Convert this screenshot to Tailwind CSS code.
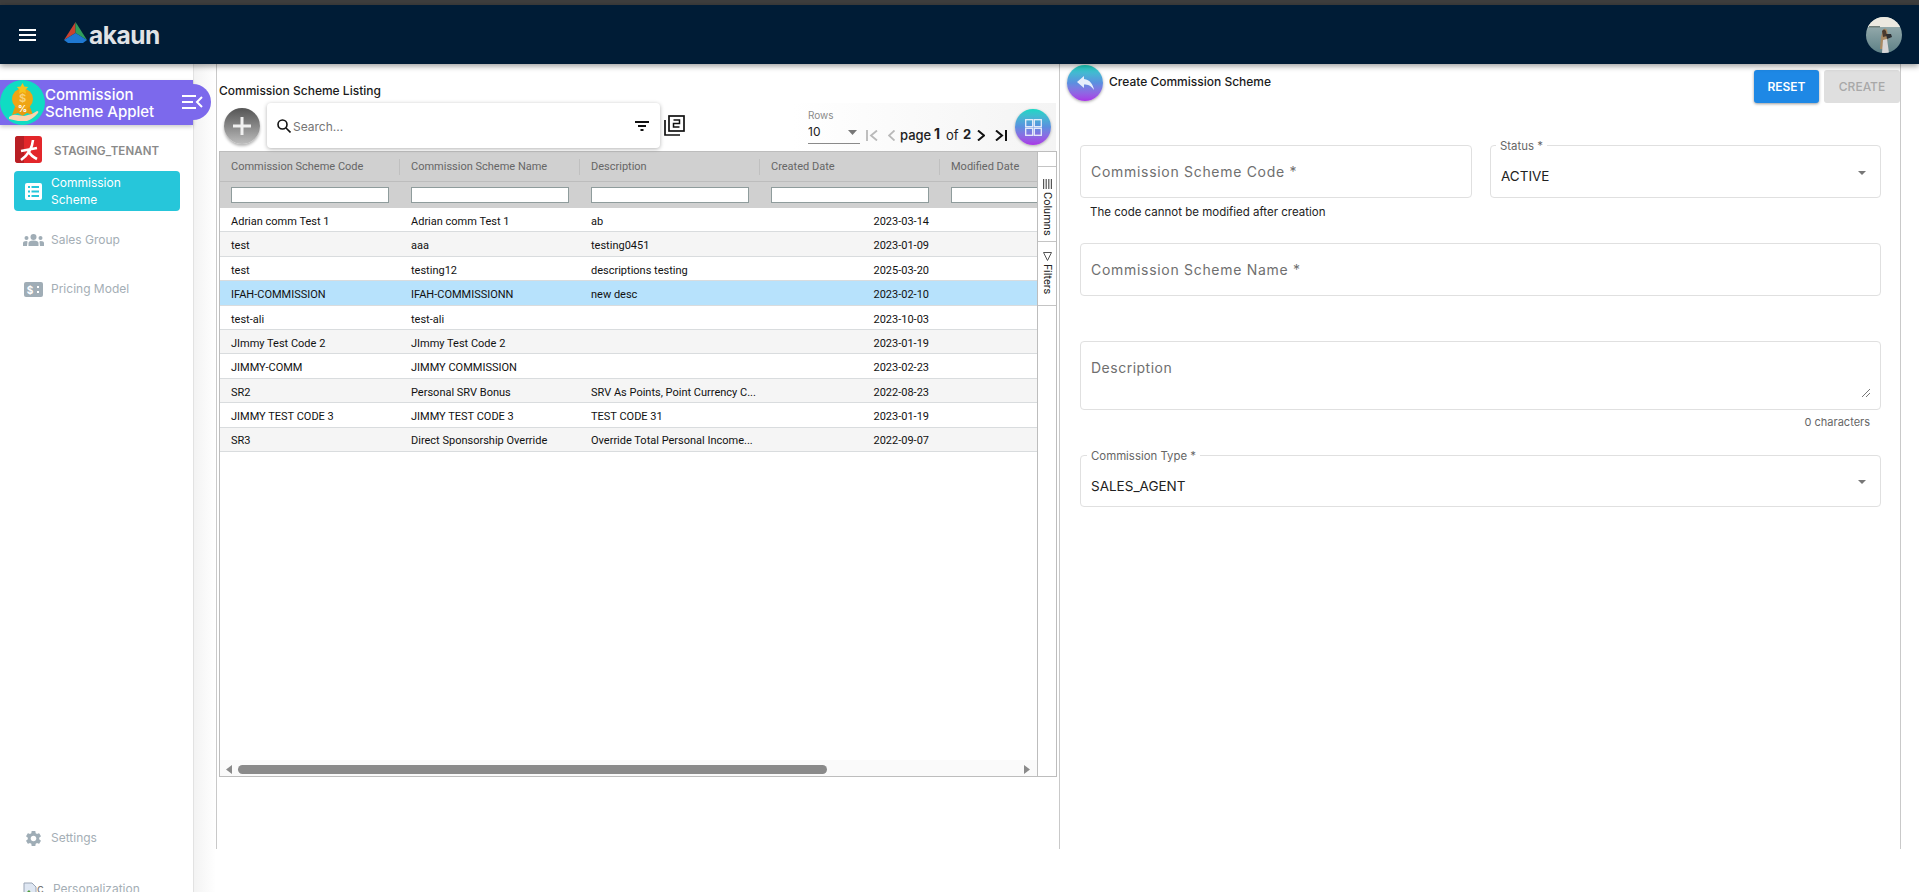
<!DOCTYPE html>
<html lang="en">
<head>
    <meta charset="UTF-8">
    <title>Commission Scheme Applet</title>
    <script src="https://cdn.jsdelivr.net/npm/@tailwindcss/browser@4"></script>
</head>
<body class="h-[892px] overflow-hidden bg-white font-[Inter,sans-serif] text-[#212121]">
    <div class="h-[5px] bg-[#3e3e3e]"></div>

    <!-- top bar -->
    <header class="relative z-20 flex h-[59px] items-center bg-[#001c36] shadow-[0_2px_6px_rgba(0,0,0,0.4)]">
        <svg class="ml-[19px] h-[12px] w-[17px]" viewBox="0 0 17 12" fill="#fff"><rect width="17" height="2"/><rect y="5" width="17" height="2"/><rect y="10" width="17" height="2"/></svg>
        <svg class="mb-[4px] ml-[28px] h-[21px] w-[23px]" viewBox="0 0 23 21">
            <path d="M11.500 0L0 18l11.500-7z" fill="#c9432f"/>
            <path d="M11.500 0L23 18l-11.500-7z" fill="#2f9e5b"/>
            <path d="M0 18l11.500-7L23 18l-4 3H4z" fill="#1f78d1"/>
        </svg>
        <span class="mt-[2px] ml-[2px] text-[24.500px] leading-none font-bold tracking-[-0.5px] text-[#e0e3e6]">akaun</span>
        <svg class="mr-[17px] ml-auto h-[36px] w-[36px] rounded-full" viewBox="0 0 36 36">
            <defs><linearGradient id="sea" x1="0" y1="0" x2="0" y2="1"><stop offset="0" stop-color="#a7b8b8"/><stop offset="1" stop-color="#5d8086"/></linearGradient></defs>
            <rect width="36" height="36" fill="url(#sea)"/>
            <rect width="36" height="10" fill="#ece9e0"/>
            <rect x="3" y="9" width="11" height="1.500" fill="#6f7d78"/>
            <path d="M14 32l1-12 2-7q2-3 4 0l1 6-2 13z" fill="#a98a64"/>
            <path d="M16 14q2-3 4 0l1 5-4 1z" fill="#4a3a2e"/>
            <path d="M20 17l5 0 1 3-5 2z" fill="#2c2f33"/>
            <path d="M16 36l1-13 4-1 2 14z" fill="#d8d6d8"/>
        </svg>
    </header>

    <div class="flex h-[828px]">
        <!-- sidebar -->
        <aside class="relative flex w-[194px] shrink-0 flex-col border-r border-[#e2e2e2] bg-white">
            <div class="mt-[16px] flex h-[45px] items-center bg-[#7c69ec] shadow-[0_2px_4px_rgba(0,0,0,0.2)]">
                <div class="h-[45px] w-[45px] shrink-0 rounded-full bg-[#0fdcc3]">
                    <svg class="h-[45px] w-[45px]" viewBox="0 0 45 45">
                        <path d="M16 24l-4 11 6-2 4.500 3 4.500-3 6 2-4-11z" fill="#e59b12"/>
                        <circle cx="22.500" cy="19" r="10.500" fill="#efa514"/>
                        <path d="M22.500 3l1.800 3.500 3.900.5-2.800 2.800.7 3.900-3.600-1.800-3.600 1.800.7-3.900-2.800-2.800 3.900-.5z" fill="#f7c21c"/>
                        <text x="22.500" y="22" font-size="11" text-anchor="middle" fill="#f8d27a" font-weight="700">$</text>
                        <text x="22.500" y="32" font-size="9" text-anchor="middle" fill="#fff" font-weight="700">%</text>
                        <path d="M9 37q4-3 8-2l7 1 4-1q5-1 9-4 2 0 1 2-5 6-11 8H18q-4-1-9-2z" fill="#fbd3b0"/>
                    </svg>
                </div>
                <p class="text-[15px] leading-[17px] font-medium text-white">Commission<br>Scheme Applet</p>
            </div>
            <div class="absolute top-[20px] left-[180px] z-10 flex h-[36px] w-[31px] items-center rounded-r-full bg-[#7c69ec] pl-[2px]">
                <svg class="h-[14px] w-[21px]" viewBox="0 0 21 14" fill="none" stroke="#fff" stroke-width="2"><path d="M0 1h14M0 7h11M0 13h14M20 2l-5 5 5 5"/></svg>
            </div>

            <div class="mt-[11px] flex items-center pl-[15px]">
                <svg class="h-[27px] w-[27px] rounded-[3px]" viewBox="0 0 27 27">
                    <rect width="27" height="27" fill="#e3262a"/>
                    <rect width="9" height="27" fill="#b81f24"/>
                    <path d="M6 15l16-3M18 4q-1 12-12 20M13 15q3 5 9 8" fill="none" stroke="#fff" stroke-width="2.600"/>
                </svg>
                <span class="ml-[12px] pt-[4px] text-[11.500px] font-semibold tracking-[0.1px] text-[#8a8a8a]">STAGING_TENANT</span>
            </div>

            <div class="mt-[8px] ml-[14px] flex h-[40px] w-[166px] items-center rounded-[4px] bg-[#26c6da] pl-[11px] text-white">
                <svg class="h-[17px] w-[17px]" viewBox="0 0 17 17"><rect width="17" height="17" rx="2" fill="#fff"/><path d="M3 4h2M6.500 4H14M3 8.500h2M6.500 8.500H14M3 13h2M6.500 13H14" stroke="#26c6da" stroke-width="2"/></svg>
                <span class="ml-[9px] text-[12px] leading-[17px]">Commission<br>Scheme</span>
            </div>

            <div class="mt-[19px] flex h-[20px] items-center pl-[23px] text-[12px] text-[#a4aeb5]">
                <svg class="h-[12px] w-[21px]" viewBox="0 0 21 12" fill="#a0adb6"><circle cx="10.500" cy="3" r="3"/><circle cx="3.500" cy="4" r="2"/><circle cx="17.500" cy="4" r="2"/><path d="M5.500 12V9q0-2.500 5-2.500t5 2.500v3zM0 12V9q0-2 3.500-2l1 .5L4 12zM21 12V9q0-2-3.500-2l-1 .5.5 4.500z"/></svg>
                <span class="ml-[7px]">Sales Group</span>
            </div>
            <div class="mt-[29px] flex h-[20px] items-center pl-[24px] text-[12px] text-[#a4aeb5]">
                <svg class="h-[15px] w-[19px]" viewBox="0 0 19 15"><rect width="19" height="15" rx="2" fill="#a0adb6"/><text x="6" y="11.500" font-size="10" font-weight="700" text-anchor="middle" fill="#fff">$</text><path d="M13 5h2M13 10h2" stroke="#fff" stroke-width="2"/></svg>
                <span class="ml-[8px]">Pricing Model</span>
            </div>

            <div class="mt-auto flex h-[20px] items-center pl-[24px] text-[12px] text-[#a4aeb5]">
                <svg class="h-[19px] w-[19px]" viewBox="0 0 24 24" fill="#9fadb6"><path d="M19.140 12.940c.040-.300.060-.610.060-.940 0-.320-.020-.640-.070-.940l2.030-1.580a.49.49 0 0 0 .120-.610l-1.920-3.320a.488.488 0 0 0-.590-.220l-2.390.960c-.500-.380-1.030-.700-1.620-.940l-.360-2.540a.484.484 0 0 0-.480-.410h-3.840c-.240 0-.430.170-.470.410l-.360 2.540c-.590.240-1.130.570-1.620.940l-2.390-.960c-.220-.080-.470 0-.590.220L2.740 8.870c-.120.210-.080.470.120.610l2.030 1.580c-.050.300-.090.630-.090.940s.020.640.070.940l-2.030 1.580a.49.49 0 0 0-.120.610l1.920 3.320c.120.220.370.290.590.220l2.390-.960c.500.380 1.030.700 1.620.940l.360 2.540c.050.240.240.410.480.410h3.840c.240 0 .440-.170.470-.410l.360-2.540c.590-.240 1.130-.560 1.620-.940l2.390.960c.220.080.470 0 .590-.220l1.920-3.320c.120-.220.070-.470-.120-.610l-2.010-1.580zM12 15.600c-1.980 0-3.600-1.620-3.600-3.600s1.620-3.600 3.600-3.600 3.600 1.620 3.600 3.600-1.620 3.600-3.600 3.600z"/></svg>
                <span class="ml-[8px]">Settings</span>
            </div>
            <div class="mt-[31px] -mb-[7px] flex h-[20px] items-center pl-[23px] text-[12px] text-[#a4aeb5]">
                <svg class="h-[14px] w-[14px]" viewBox="0 0 14 14"><path d="M1 1h8l4 4v8H1z" fill="#dfe7f3" stroke="#9aa5b5"/><path d="M1 13l5-5 4 5z" fill="#4f9e3a"/></svg>
                <span class="w-[7px] overflow-hidden text-[#777]">c</span>
                <span class="ml-[9px]">Personalization</span>
            </div>
        </aside>

        <div class="w-[22px] shrink-0 bg-gradient-to-r from-[#f3f3f3] to-white"></div>

        <main class="flex h-[785px] w-[1685px] shrink-0 border-x border-[#c9c9c9]">
            <!-- listing -->
            <section class="w-[843px] shrink-0 border-r border-[#c9c9c9] pl-[2px]">
                <h2 class="pt-[19px] text-[12px] leading-[15px] font-medium text-[#1b1b1b]">Commission Scheme Listing</h2>
                <div class="relative mt-[5px] flex h-[48px] items-start">
                    <div class="mt-[5px] ml-[5px] flex h-[36px] w-[36px] items-center justify-center rounded-full bg-gradient-to-b from-[#555555] to-[#bdbdbd] shadow-[0_2px_3px_rgba(0,0,0,0.3)]">
                        <svg class="h-[18px] w-[18px]" viewBox="0 0 18 18" fill="#f0f0f0"><rect x="7.500" width="3" height="18"/><rect y="7.500" width="18" height="3"/></svg>
                    </div>
                    <div class="ml-[7px] flex h-[45px] w-[393px] items-center rounded-[4px] bg-white pr-[11px] pl-[10px] shadow-[0_1px_4px_rgba(0,0,0,0.3)]">
                        <svg class="h-[14px] w-[14px]" viewBox="0 0 14 14" fill="none" stroke="#111" stroke-width="1.600"><circle cx="5.500" cy="5.500" r="4.500"/><path d="M9 9l4.500 4.500"/></svg>
                        <span class="ml-[2px] pt-[2px] text-[12px] text-[#757575]">Search...</span>
                        <svg class="ml-auto h-[10px] w-[14px]" viewBox="0 0 14 10" fill="#111"><rect width="14" height="2"/><rect x="3" y="4" width="8" height="2"/><rect x="5.500" y="8" width="3" height="2"/></svg>
                    </div>
                    <svg class="mt-[12px] ml-[4px] h-[21px] w-[21px]" viewBox="0 0 21 21" fill="none" stroke="#111" stroke-width="1.700"><path d="M1 5v15h15"/><rect x="5" y="1" width="15" height="15"/><path d="M9.500 5h6v3.500h-6V12h6" stroke-width="1.500"/></svg>
                    <div class="mr-[3px] ml-auto flex h-[48px] w-[264px] bg-gradient-to-r from-white to-[#f4f4f4]">
                        <div class="ml-[16px] h-[41px] w-[52px] shrink-0 border-b border-[#8a8a8a]">
                            <p class="pt-[6px] text-[10px] leading-[12px] text-[#8a8a8a]">Rows</p>
                            <div class="flex items-center justify-between pt-[4px] pr-[3px] text-[12px] leading-[14px]">10
                                <svg class="h-[5px] w-[9px]" viewBox="0 0 9 5" fill="#777"><path d="M0 0h9L4.500 5z"/></svg>
                            </div>
                        </div>
                        <svg class="mt-[27px] ml-[6px] h-[11px] w-[12px] shrink-0" viewBox="0 0 12 11" fill="none" stroke="#b9b9b9" stroke-width="1.800"><path d="M1 0v11M11 .5L5 5.500l6 5"/></svg>
                        <svg class="mt-[27px] ml-[10px] h-[11px] w-[7px] shrink-0" viewBox="0 0 7 11" fill="none" stroke="#b9b9b9" stroke-width="1.800"><path d="M6.500 .5L1 5.500l5.500 5"/></svg>
                        <span class="mt-[24px] ml-[5px] w-[31px] shrink-0 text-[13px] leading-[16px] font-medium">page</span>
                        <b class="mt-[23px] ml-[3px] w-[8px] shrink-0 text-[14px] leading-[16px]">1</b>
                        <span class="mt-[24px] ml-[4px] w-[13px] shrink-0 text-[13px] leading-[16px]">of</span>
                        <b class="mt-[23px] ml-[4px] w-[9px] shrink-0 text-[13px] leading-[16px]">2</b>
                        <svg class="mt-[27px] ml-[5px] h-[11px] w-[8px] shrink-0" viewBox="0 0 8 11" fill="none" stroke="#111" stroke-width="2"><path d="M1 .5L7 5.500l-6 5"/></svg>
                        <svg class="mt-[27px] ml-[10px] h-[11px] w-[12px] shrink-0" viewBox="0 0 12 11" fill="none" stroke="#111" stroke-width="2"><path d="M1 .5L7 5.500l-6 5M11 0v11"/></svg>
                        <div class="mt-[6px] ml-[8px] flex h-[36px] w-[36px] shrink-0 items-center justify-center rounded-full bg-gradient-to-b from-[#13d8c4] via-[#5a8fdf] to-[#a834e6] shadow-[0_1px_3px_rgba(0,0,0,0.3)]">
                            <svg class="h-[17px] w-[17px]" viewBox="0 0 17 17" fill="none" stroke="#e8eefa" stroke-width="1.300"><rect x=".7" y=".7" width="7" height="7"/><rect x="9.300" y=".7" width="7" height="7"/><rect x=".7" y="9.300" width="7" height="7"/><rect x="9.300" y="9.300" width="7" height="7"/></svg>
                        </div>
                    </div>
                </div>

                <!-- grid -->
                <div class="flex h-[626px] w-[838px] border border-[#bdbdbd] font-[Roboto,sans-serif] text-[11px]">
                    <div class="flex w-[817px] shrink-0 flex-col">
                        <div class="flex h-[29px] shrink-0 items-center overflow-hidden bg-[#d0d0d0] pt-[1px] text-[#666]">
                            <div class="w-[179px] shrink-0 pl-[11px]">Commission Scheme Code</div>
                            <div class="w-[180px] shrink-0 border-l border-[#c0c0c0] pl-[11px]">Commission Scheme Name</div>
                            <div class="w-[180px] shrink-0 border-l border-[#c0c0c0] pl-[11px]">Description</div>
                            <div class="w-[180px] shrink-0 border-l border-[#c0c0c0] pl-[11px]">Created Date</div>
                            <div class="w-[180px] shrink-0 border-l border-[#c0c0c0] pl-[11px]">Modified Date</div>
                        </div>
                        <div class="flex h-[27px] shrink-0 items-center overflow-hidden border-t border-[#bdbdbd] bg-[#d0d0d0] pl-[11px]">
                            <div class="mr-[22px] h-[16px] w-[158px] shrink-0 border border-[#8f9c9c] bg-white"></div>
                            <div class="mr-[22px] h-[16px] w-[158px] shrink-0 border border-[#8f9c9c] bg-white"></div>
                            <div class="mr-[22px] h-[16px] w-[158px] shrink-0 border border-[#8f9c9c] bg-white"></div>
                            <div class="mr-[22px] h-[16px] w-[158px] shrink-0 border border-[#8f9c9c] bg-white"></div>
                            <div class="h-[16px] w-[158px] shrink-0 border border-[#8f9c9c] bg-white"></div>
                        </div>
                        <div class="flex-1 text-[#111]">
                            <div class="flex h-[24.400px] items-center border-b border-[#d9dcde] bg-white pt-[5px]"><span class="w-[179px] pl-[11px]">Adrian comm Test 1</span><span class="w-[180px] pl-[12px]">Adrian comm Test 1</span><span class="w-[180px] pl-[12px]">ab</span><span class="w-[170px] text-right">2023-03-14</span></div>
                            <div class="flex h-[24.400px] items-center border-b border-[#d9dcde] bg-[#f5f5f5] pt-[5px]"><span class="w-[179px] pl-[11px]">test</span><span class="w-[180px] pl-[12px]">aaa</span><span class="w-[180px] pl-[12px]">testing0451</span><span class="w-[170px] text-right">2023-01-09</span></div>
                            <div class="flex h-[24.400px] items-center border-b border-[#d9dcde] bg-white pt-[5px]"><span class="w-[179px] pl-[11px]">test</span><span class="w-[180px] pl-[12px]">testing12</span><span class="w-[180px] pl-[12px]">descriptions testing</span><span class="w-[170px] text-right">2025-03-20</span></div>
                            <div class="flex h-[24.400px] items-center border-b border-[#d9dcde] bg-[#b7e2fc] pt-[5px]"><span class="w-[179px] pl-[11px]">IFAH-COMMISSION</span><span class="w-[180px] pl-[12px]">IFAH-COMMISSIONN</span><span class="w-[180px] pl-[12px]">new desc</span><span class="w-[170px] text-right">2023-02-10</span></div>
                            <div class="flex h-[24.400px] items-center border-b border-[#d9dcde] bg-white pt-[5px]"><span class="w-[179px] pl-[11px]">test-ali</span><span class="w-[180px] pl-[12px]">test-ali</span><span class="w-[180px] pl-[12px]"></span><span class="w-[170px] text-right">2023-10-03</span></div>
                            <div class="flex h-[24.400px] items-center border-b border-[#d9dcde] bg-[#f5f5f5] pt-[5px]"><span class="w-[179px] pl-[11px]">JImmy Test Code 2</span><span class="w-[180px] pl-[12px]">JImmy Test Code 2</span><span class="w-[180px] pl-[12px]"></span><span class="w-[170px] text-right">2023-01-19</span></div>
                            <div class="flex h-[24.400px] items-center border-b border-[#d9dcde] bg-white pt-[5px]"><span class="w-[179px] pl-[11px]">JIMMY-COMM</span><span class="w-[180px] pl-[12px]">JIMMY COMMISSION</span><span class="w-[180px] pl-[12px]"></span><span class="w-[170px] text-right">2023-02-23</span></div>
                            <div class="flex h-[24.400px] items-center border-b border-[#d9dcde] bg-[#f5f5f5] pt-[5px]"><span class="w-[179px] pl-[11px]">SR2</span><span class="w-[180px] pl-[12px]">Personal SRV Bonus</span><span class="w-[180px] pl-[12px]">SRV As Points, Point Currency C...</span><span class="w-[170px] text-right">2022-08-23</span></div>
                            <div class="flex h-[24.400px] items-center border-b border-[#d9dcde] bg-white pt-[5px]"><span class="w-[179px] pl-[11px]">JIMMY TEST CODE 3</span><span class="w-[180px] pl-[12px]">JIMMY TEST CODE 3</span><span class="w-[180px] pl-[12px]">TEST CODE 31</span><span class="w-[170px] text-right">2023-01-19</span></div>
                            <div class="flex h-[24.400px] items-center border-b border-[#d9dcde] bg-[#f5f5f5] pt-[5px]"><span class="w-[179px] pl-[11px]">SR3</span><span class="w-[180px] pl-[12px]">Direct Sponsorship Override</span><span class="w-[180px] pl-[12px]">Override Total Personal Income...</span><span class="w-[170px] text-right">2022-09-07</span></div>
                        </div>
                        <div class="flex h-[16px] shrink-0 items-center bg-[#fafafa] pt-[2px]">
                            <svg class="ml-[6px] h-[9px] w-[6px]" viewBox="0 0 6 9" fill="#8a8a8a"><path d="M6 0v9L0 4.500z"/></svg>
                            <div class="ml-[6px] h-[9px] w-[589px] rounded-full bg-[#8a8a8a]"></div>
                            <svg class="mr-[7px] ml-auto h-[9px] w-[6px]" viewBox="0 0 6 9" fill="#8a8a8a"><path d="M0 0v9l6-4.500z"/></svg>
                        </div>
                    </div>
                    <div class="flex-1 border-l border-[#bdbdbd] pt-[14px] text-[#222]">
                        <div class="flex h-[76px] flex-col items-center border-y border-[#c4c4c4] pt-[12px]">
                            <svg class="h-[10px] w-[9px]" viewBox="0 0 9 10" fill="#555"><path d="M0 0h1.200v10H0zM2.600 0h1.200v10H2.600zM5.200 0h1.200v10H5.200zM7.800 0H9v10H7.800z"/></svg>
                            <span class="mt-[3px] [writing-mode:vertical-lr]">Columns</span>
                        </div>
                        <div class="flex h-[64px] flex-col items-center border-b border-[#c4c4c4] pt-[10px]">
                            <svg class="h-[9px] w-[9px]" viewBox="0 0 9 9" fill="none" stroke="#555"><path d="M.5 .5h8L4.500 8.500z"/></svg>
                            <span class="mt-[3px] [writing-mode:vertical-lr]">Filters</span>
                        </div>
                    </div>
                </div>
            </section>

            <!-- create form -->
            <section class="flex-1 pr-[19px] pl-[20px]">
                <div class="relative flex h-[81px] items-start">
                    <div class="mt-[1px] -ml-[13px] flex h-[36px] w-[36px] items-center justify-center rounded-full bg-gradient-to-b from-[#13d8c4] via-[#5a8fdf] to-[#a834e6] shadow-[0_1px_3px_rgba(0,0,0,0.35)]">
                        <svg class="h-[14px] w-[17px]" viewBox="0 0 17 14" fill="#e6eefb"><path d="M7 0L0 6l7 6V8.500c4 0 7 1 10 5.500-1-6-4-10-10-11z"/></svg>
                    </div>
                    <h2 class="mt-[10px] ml-[6px] text-[12px] leading-[15px] font-medium text-[#1b1b1b]">Create Commission Scheme</h2>
                    <button class="mt-[6px] ml-auto flex h-[33px] w-[65px] items-center justify-center rounded-[3px] bg-[#1e88e5] text-[12px] font-semibold text-white shadow-[0_1px_3px_rgba(0,0,0,0.4)]">RESET</button>
                    <button class="mt-[6px] ml-[5px] -mr-[19px] flex h-[33px] w-[76px] items-center justify-center rounded-[3px] bg-[#dfdfdf] text-[12px] font-medium text-[#a8a8a8]">CREATE</button>
                </div>
                <div class="flex gap-[18px]">
                    <div class="w-[392px]">
                        <div class="flex h-[53px] items-center rounded-[4px] border border-[#e0e0e0] pl-[10px] text-[14px] tracking-[0.7px] text-[#6f6f6f]">Commission Scheme Code *</div>
                        <p class="mt-[8px] pl-[10px] text-[11.500px] leading-[13px] text-[#222]">The code cannot be modified after creation</p>
                    </div>
                    <div class="relative flex h-[53px] w-[391px] items-center justify-between rounded-[4px] border border-[#e0e0e0] pt-[10px] pr-[14px] pl-[10px] text-[13.500px]">
                        <span class="absolute -top-[7px] left-[5px] bg-white px-[4px] text-[11.400px] leading-[14px] text-[#666]">Status *</span>
                        ACTIVE
                        <svg class="mb-[8px] h-[4px] w-[8px]" viewBox="0 0 8 4" fill="#777"><path d="M0 0h8L4 4z"/></svg>
                    </div>
                </div>
                <div class="mt-[24px] flex h-[53px] w-[801px] items-center rounded-[4px] border border-[#e0e0e0] pl-[10px] text-[14px] tracking-[0.7px] text-[#6f6f6f]">Commission Scheme Name *</div>
                <div class="relative mt-[45px] h-[69px] w-[801px] rounded-[4px] border border-[#e0e0e0] pt-[15px] pl-[10px] text-[14px] tracking-[0.5px] text-[#6f6f6f]">
                    Description
                    <svg class="absolute right-[10px] bottom-[12px] h-[8px] w-[8px]" viewBox="0 0 8 8" fill="none" stroke="#777"><path d="M0 8l8-8M4 8l4-4"/></svg>
                </div>
                <p class="mt-[6px] w-[790px] text-right text-[11px] leading-[13px] text-[#666]">0 characters</p>
                <div class="relative mt-[26px] flex h-[52px] w-[801px] items-center justify-between rounded-[4px] border border-[#e0e0e0] pt-[10px] pr-[14px] pl-[10px] text-[13.500px]">
                    <span class="absolute -top-[7px] left-[6px] bg-white px-[4px] text-[11.400px] leading-[14px] text-[#666]">Commission Type *</span>
                    SALES_AGENT
                    <svg class="mb-[8px] h-[4px] w-[8px]" viewBox="0 0 8 4" fill="#777"><path d="M0 0h8L4 4z"/></svg>
                </div>
            </section>
        </main>
    </div>
</body>
</html>
